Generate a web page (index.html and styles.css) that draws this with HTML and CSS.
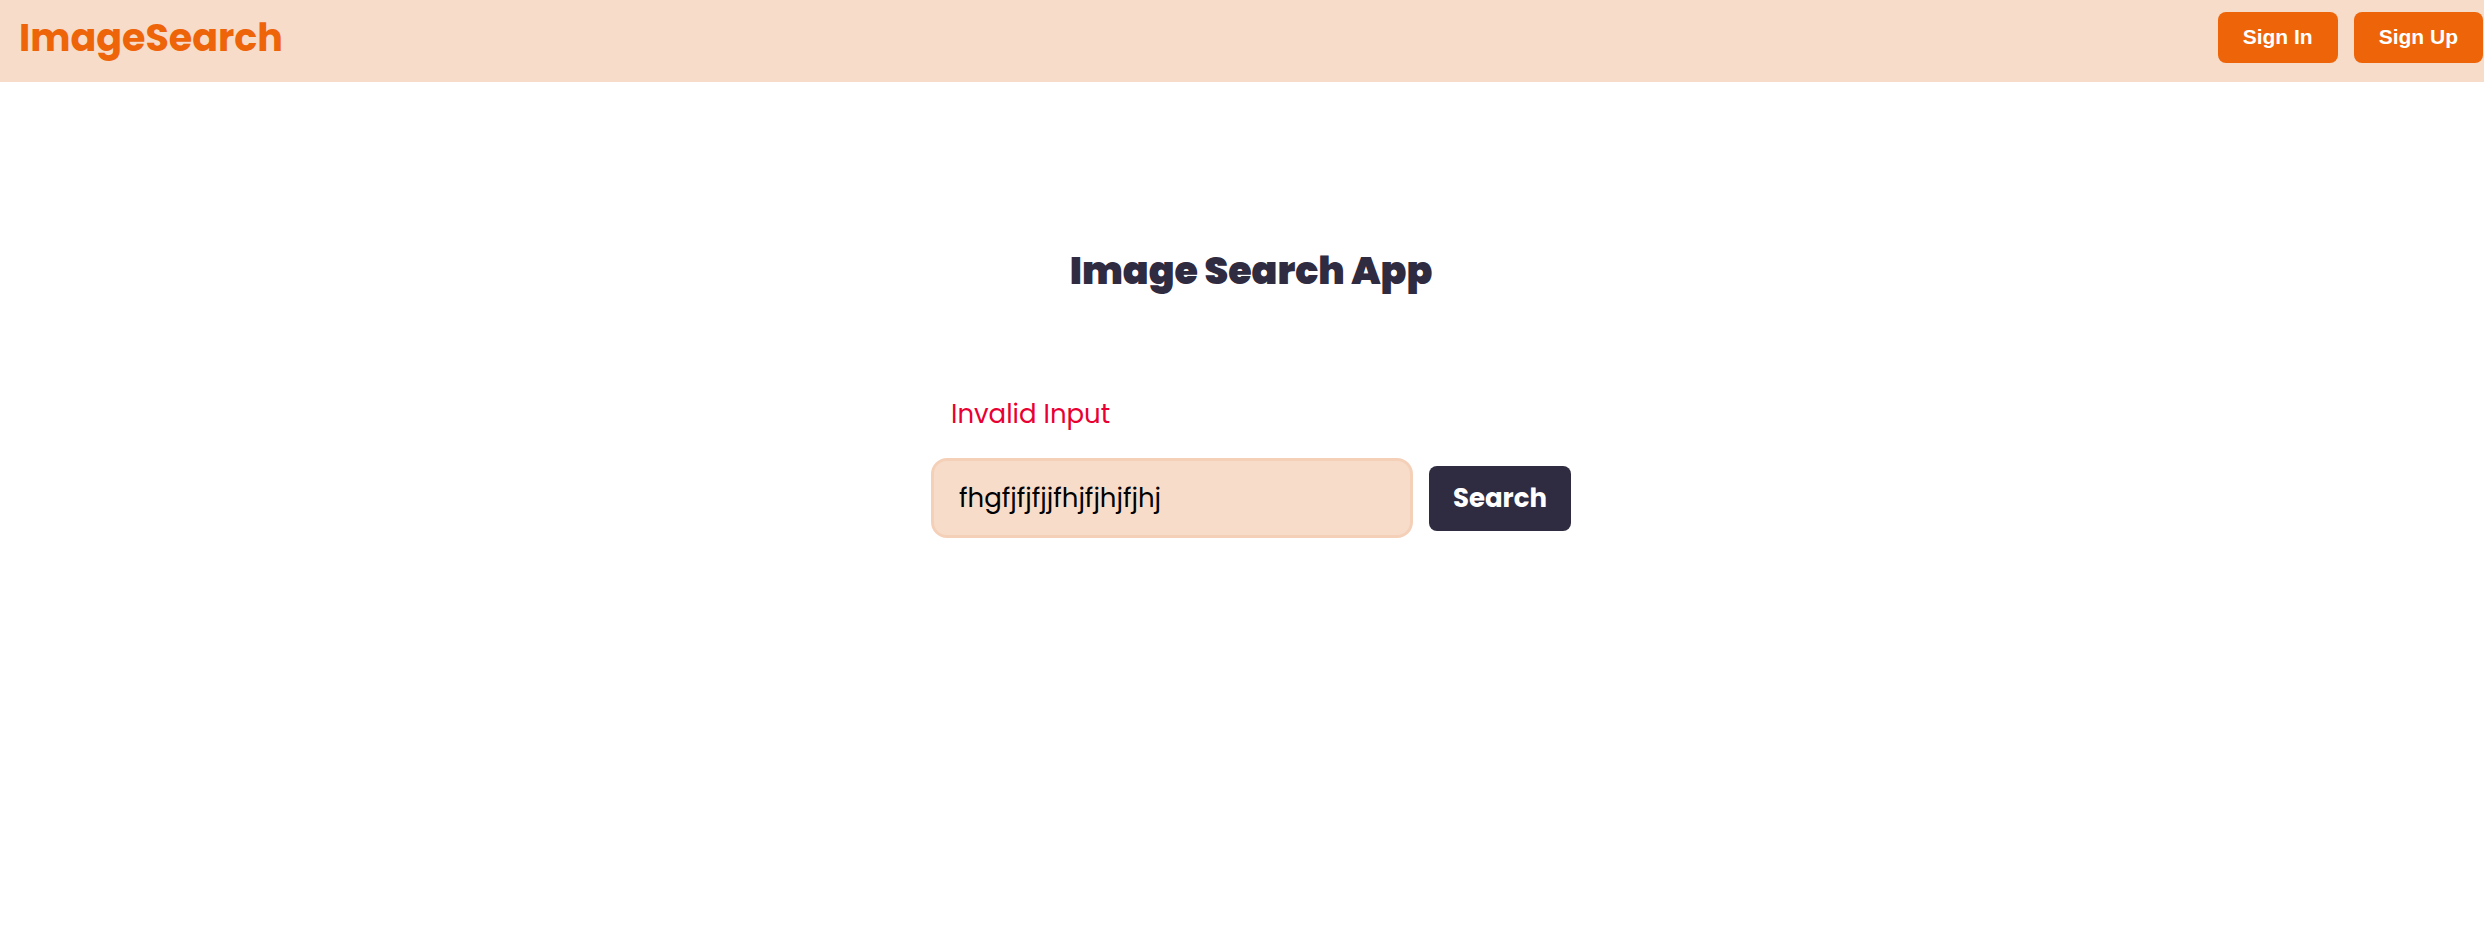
FILE: index.html
```html
<!DOCTYPE html>
<html lang="en">
<head>
  <meta charset="utf-8">
  <meta name="viewport" content="width=device-width, initial-scale=1">
  <title>ImageSearch</title>
  <link rel="stylesheet" href="styles.css">
</head>
<body>
  <header class="navbar">
    <a class="logo" href="#">ImageSearch</a>
    <nav class="nav-actions">
      <button class="nav-button" type="button">Sign In</button>
      <button class="nav-button" type="button">Sign Up</button>
    </nav>
  </header>
  <main class="content">
    <h1 class="title">Image Search App</h1>
    <form class="search">
      <label class="error" for="query">Invalid Input</label>
      <div class="search-row">
        <input class="search-input" id="query" type="text" value="fhgfjfjfjjfhjfjhjfjhj" spellcheck="false">
        <button class="search-button" type="button">Search</button>
      </div>
    </form>
  </main>
</body>
</html>
```
FILE: styles.css
```css
* {
  box-sizing: border-box;
}

body {
  margin: 0;
  background: #fff;
  font-family: Poppins, Inter, sans-serif;
}

.navbar {
  display: flex;
  justify-content: space-between;
  align-items: flex-start;
  padding: 12px 1px 18px 19px;
  background: #f7dcca;
}

.logo {
  color: #ee6409;
  font-size: 38px;
  font-weight: 700;
  line-height: 52px;
  text-decoration: none;
}

.nav-actions {
  display: flex;
  gap: 16px;
}

.nav-button {
  padding: 13px 25px 14px;
  border: 0;
  border-radius: 8px;
  background: #ee6409;
  color: #fff;
  font: 700 21px/24px "Liberation Sans", Arial, sans-serif;
}

.content {
  display: flex;
  flex-direction: column;
  align-items: center;
  padding: 159px 0 0 18px;
}

.title {
  margin: 0;
  color: #2f2b40;
  font-size: 38px;
  font-weight: 900;
  line-height: 60px;
}

.search {
  width: 640px;
  max-width: 100%;
  margin-top: 95px;
}

.error {
  display: block;
  padding-left: 20px;
  color: #e90033;
  font-size: 26px;
  line-height: 36px;
}

.search-row {
  display: flex;
  align-items: center;
  gap: 16px;
  margin-top: 26px;
}

.search-input {
  flex: 1;
  min-width: 0;
  height: 80px;
  padding: 0 25px;
  border: 3px solid #f5d0b9;
  border-radius: 16px;
  outline: 0;
  background: #f7dcca;
  color: #000;
  font: 400 26px Poppins, Inter, sans-serif;
}

.search-button {
  padding: 16px 24px;
  border: 0;
  border-radius: 8px;
  background: #2f2b40;
  color: #fff;
  font: 700 26px/33px Poppins, Inter, sans-serif;
}
```
